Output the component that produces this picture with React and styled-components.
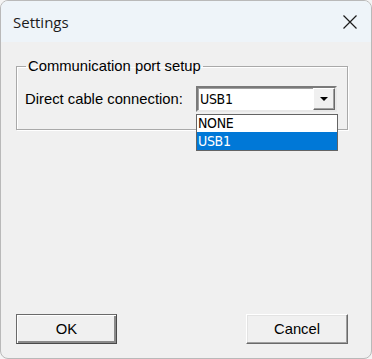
import React from "react";
import styled, { createGlobalStyle } from "styled-components";

const Global = createGlobalStyle`
  html, body { margin: 0; padding: 0; background: #f4f4f4; }
  * { box-sizing: border-box; }
`;

const Window = styled.div`
  width: 372px;
  height: 359px;
  display: flex;
  flex-direction: column;
  border: 1px solid #b9b9b9;
  border-radius: 8px;
  overflow: hidden;
  background: #f0f0f0;
`;

const TitleBar = styled.div`
  height: 41px;
  flex: 0 0 41px;
  display: flex;
  align-items: center;
  justify-content: space-between;
  padding: 0 12px 0 12px;
  background: #eef4f9;
  font-family: "Open Sans", "Noto Sans", sans-serif;
  font-size: 15px;
  color: #1b1b1b;
`;

const Title = styled.span`
  padding-top: 1px;
`;

const CloseButton = styled.span`
  display: flex;
  width: 16px;
  height: 16px;
  margin-right: 1px;
`;

const Body = styled.div`
  flex: 1;
  display: flex;
  flex-direction: column;
  justify-content: space-between;
  padding: 16px 23px 14px 15px;
  font-family: "Liberation Sans", Arial, sans-serif;
  font-size: 14.8px;
  color: #000;
`;

const Group = styled.fieldset`
  margin: 0;
  padding: 12px 8px 17px 8px;
  border: 1px solid #a9a9a9;
  box-shadow: inset 1px 1px 0 #fff, 1px 1px 0 #fff;
  min-width: 0;
`;

const Legend = styled.legend`
  margin-left: 1px;
  padding: 0 2px 0 2px;
  line-height: 16px;
`;

const Row = styled.div`
  display: flex;
  align-items: center;
`;

const Label = styled.span`
  flex: 0 0 171px;
`;

const ComboWrap = styled.div`
  position: relative;
  width: 141px;
  height: 26px;
`;

const Combo = styled.div`
  width: 100%;
  height: 100%;
  display: flex;
  align-items: stretch;
  background: #fff;
  border-style: solid;
  border-width: 2px;
  border-color: #7a7a7a #e8e8e8 #e8e8e8 #7a7a7a;
  box-shadow: inset 1px 1px 0 #a0a0a0;
`;

const ComboText = styled.span`
  flex: 1;
  display: flex;
  align-items: center;
  padding-left: 2px;
  font-family: "DejaVu Sans Condensed", "Liberation Sans", sans-serif;
  font-size: 14px;
  letter-spacing: -0.3px;
`;

const DropButton = styled.span`
  flex: 0 0 22px;
  display: flex;
  align-items: center;
  justify-content: center;
  background: #f0f0f0;
  border-style: solid;
  border-width: 1px;
  border-color: #fff #6a6a6a #6a6a6a #fff;
  box-shadow: inset -1px -1px 0 #a0a0a0;
`;

const Arrow = styled.span`
  width: 0;
  height: 0;
  border-left: 4px solid transparent;
  border-right: 4px solid transparent;
  border-top: 4px solid #000;
`;

const List = styled.div`
  position: absolute;
  top: 28px;
  left: 0;
  width: 142px;
  background: #fff;
  border: 1px solid #646464;
  font-family: "DejaVu Sans Condensed", "Liberation Sans", sans-serif;
  font-size: 14px;
  letter-spacing: -0.3px;
`;

const Option = styled.div`
  height: ${(p) => (p.$tall ? 18 : 17)}px;
  line-height: ${(p) => (p.$tall ? 18 : 17)}px;
  padding-left: 1px;
  background: ${(p) => (p.$selected ? "#0078d7" : "#fff")};
  color: ${(p) => (p.$selected ? "#fff" : "#000")};
`;

const Buttons = styled.div`
  display: flex;
  justify-content: space-between;
`;

const Button = styled.button`
  width: ${(p) => p.$w}px;
  height: 30px;
  font-family: "Liberation Sans", Arial, sans-serif;
  font-size: 14.8px;
  color: #000;
  background: #f0f0f0;
  padding: 0;
  border-style: solid;
  border-width: 1px;
  border-color: ${(p) =>
    p.$default ? "#6a6a6a #4a4a4a #4a4a4a #6a6a6a" : "#fff #6a6a6a #6a6a6a #fff"};
  box-shadow: ${(p) =>
    p.$default
      ? "inset 1px 1px 0 #fff, inset -2px -2px 0 #8a8a8a"
      : "inset -1px -1px 0 #a0a0a0, inset 1px 1px 0 #e3e3e3"};
`;

export default function App() {
  return (
    <>
      <Global />
      <Window>
        <TitleBar>
          <Title>Settings</Title>
          <CloseButton>
            <svg width="16" height="16" viewBox="0 0 16 16">
              <path d="M1.5 1.5 L14.5 14.5 M14.5 1.5 L1.5 14.5" stroke="#1b1b1b" strokeWidth="1.2" fill="none" />
            </svg>
          </CloseButton>
        </TitleBar>
        <Body>
          <Group>
            <Legend>Communication port setup</Legend>
            <Row>
              <Label>Direct cable connection:</Label>
              <ComboWrap>
                <Combo>
                  <ComboText>USB1</ComboText>
                  <DropButton>
                    <Arrow />
                  </DropButton>
                </Combo>
                <List>
                  <Option>NONE</Option>
                  <Option $selected $tall>USB1</Option>
                </List>
              </ComboWrap>
            </Row>
          </Group>
          <Buttons>
            <Button $w={101} $default>OK</Button>
            <Button $w={102}>Cancel</Button>
          </Buttons>
        </Body>
      </Window>
    </>
  );
}
